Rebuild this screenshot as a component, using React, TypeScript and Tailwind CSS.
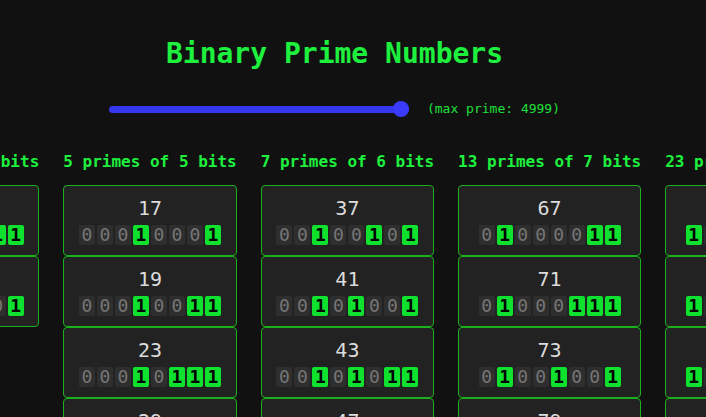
import React from "react"

const MAX_PRIME = 4999

function primesUpTo(n: number): number[] {
  const sieve = new Array(n + 1).fill(true)
  sieve[0] = sieve[1] = false
  for (let i = 2; i * i <= n; i++) {
    if (sieve[i]) for (let j = i * i; j <= n; j += i) sieve[j] = false
  }
  const out: number[] = []
  for (let i = 2; i <= n; i++) if (sieve[i]) out.push(i)
  return out
}

function groupByBits(primes: number[]) {
  const groups: { bits: number; primes: number[] }[] = []
  for (const p of primes) {
    const bits = p.toString(2).length
    let g = groups.find((x) => x.bits === bits)
    if (!g) {
      g = { bits, primes: [] }
      groups.push(g)
    }
    g.primes.push(p)
  }
  return groups
}

const mono = { fontFamily: '"DejaVu Sans Mono", "Liberation Mono", monospace' }

export default function App() {
  const groups = groupByBits(primesUpTo(MAX_PRIME))

  return (
    <div className="h-screen w-full overflow-hidden bg-[#111111] pt-[37px]" style={mono}>
      {/* Header */}
      <div className="w-[669px]">
        <h1 className="text-center text-[28px] font-bold leading-[34px] text-[#1ef03e]">
          Binary Prime Numbers
        </h1>

        <div className="mt-[30px] flex items-center justify-center gap-[18px]">
          <div className="relative h-4 w-[300px]">
            <div className="absolute inset-x-0 top-[4.5px] h-[7px] rounded-full bg-[#3636ee]" />
            <div className="absolute right-0 top-0 h-4 w-4 rounded-full bg-[#3a3afb]" />
          </div>
          <span className="text-[13px] leading-4 text-[#1ee03a]">(max prime: {MAX_PRIME})</span>
        </div>
      </div>

      {/* Columns */}
      <div className="ml-[-529px] mt-[33px] flex items-start gap-[24px]">
        {groups.map((g) => (
          <Column key={g.bits} bits={g.bits} primes={g.primes.slice(0, 6)} count={g.primes.length} />
        ))}
      </div>
    </div>
  )
}

function Column({ bits, primes, count }: { bits: number; primes: number[]; count: number }) {
  return (
    <div className="flex shrink-0 flex-col">
      <p className="whitespace-nowrap text-center text-base font-bold leading-6 text-[#1ef03e]">
        {count} primes of {bits} bits
      </p>
      <div className="mt-[11px] flex flex-col">
        {primes.map((p) => (
          <Card key={p} value={p} width={Math.max(8, bits)} />
        ))}
      </div>
    </div>
  )
}

function Card({ value, width }: { value: number; width: number }) {
  const digits = value.toString(2).padStart(width, "0").split("")
  return (
    <div className="flex flex-col items-center rounded-[4px] border border-[#1cb01c] bg-[#222222] px-3 pb-[10px] pt-2">
      <span className="text-xl leading-7 text-[#dcdcdc]">{value}</span>
      <div className="mt-[3px] flex gap-[2px]">
        {digits.map((d, i) => (
          <span
            key={i}
            className={
              d === "1"
                ? "flex h-5 w-4 items-center justify-center rounded-[2px] bg-[#0fe22e] text-[18px] font-bold leading-none text-black"
                : "flex h-5 w-4 items-center justify-center rounded-[2px] bg-[#2e2e2e] text-[18px] leading-none text-[#767676]"
            }
          >
            {d}
          </span>
        ))}
      </div>
    </div>
  )
}
